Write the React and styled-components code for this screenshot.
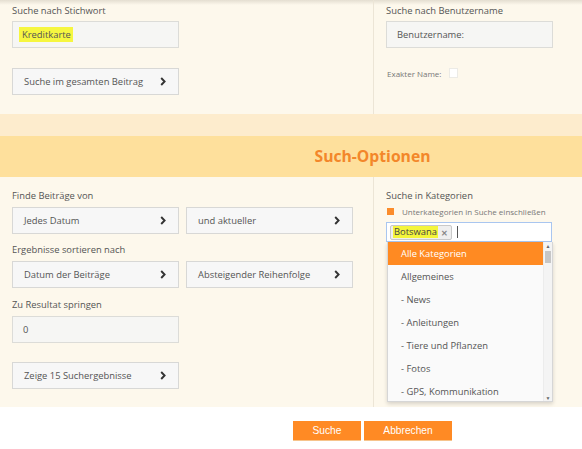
import React from "react";
import styled, { createGlobalStyle } from "styled-components";

const Global = createGlobalStyle`
  html, body { margin: 0; padding: 0; background: #ffffff; }
  body { font-family: "Open Sans", "Liberation Sans", sans-serif; color: #555; width: 582px; height: 449px; overflow: hidden; }
  * { box-sizing: border-box; }
`;

const Page = styled.div`
  width: 582px;
  height: 449px;
  display: flex;
  flex-direction: column;
  position: relative;
  &::before {
    content: "";
    position: absolute;
    left: 0; right: 0; top: 0; height: 5px;
    background: linear-gradient(#e4ded1, rgba(253,248,236,0));
  }
`;

const Section = styled.div`
  display: grid;
  grid-template-columns: 373px 1fr;
  background: #fdf8ec;
  height: ${(p) => p.$h}px;
`;

const Column = styled.div`
  display: flex;
  flex-direction: column;
  padding: ${(p) => p.$pt}px 0 0 12px;
  border-left: ${(p) => (p.$right ? "1px solid #ece5d6" : "none")};
  position: relative;
`;

const Label = styled.div`
  font-size: 9.4px;
  line-height: 16px;
  height: 16px;
  color: #555;
  white-space: nowrap;
  margin-top: ${(p) => p.$mt || 0}px;
`;

const Field = styled.div`
  width: 167px;
  height: 27px;
  margin-top: ${(p) => p.$mt || 0}px;
  background: #f6f6f4;
  border: 1px solid #dcdcd8;
  display: flex;
  align-items: center;
  padding-left: ${(p) => p.$pl || 10}px;
  font-size: 9.4px;
  color: #555;
`;

const Mark = styled.span`
  background: #f6f640;
  padding: 1px 2px 1px 3px;
  color: #555;
`;

const SelectButton = styled.div`
  width: 167px;
  height: 27px;
  margin-top: ${(p) => p.$mt || 0}px;
  background: #f7f7f7;
  border: 1px solid #d8d8d6;
  display: flex;
  align-items: center;
  justify-content: space-between;
  padding: 0 12px 0 11px;
  font-size: 9.4px;
  color: #555;
  white-space: nowrap;
`;

const Row = styled.div`
  display: flex;
  gap: 7px;
  margin-top: ${(p) => p.$mt || 0}px;
`;

const Chevron = () => (
  <svg width="6" height="9" viewBox="0 0 6 9">
    <path d="M1.2 1 L4.6 4.5 L1.2 8" fill="none" stroke="#333" strokeWidth="1.9" />
  </svg>
);

const SmallRow = styled.div`
  display: flex;
  align-items: center;
  gap: ${(p) => p.$gap || 6}px;
  margin-top: ${(p) => p.$mt || 0}px;
  padding-left: ${(p) => p.$pl || 0}px;
  font-size: 8px;
  color: #777;
  height: 12px;
  white-space: nowrap;
`;

const Checkbox = styled.span`
  width: 9px;
  height: 10px;
  background: #ffffff;
  border: 1px solid #ecebe6;
`;

const OrangeSquare = styled.span`
  width: 7px;
  height: 7px;
  background: #fb8c2c;
`;

const LightBand = styled.div`
  height: 22px;
  background: #fdeccd;
`;

const Band = styled.div`
  height: 41px;
  background: #fee09c;
  display: flex;
  align-items: center;
  justify-content: center;
  padding-left: 163px;
  padding-bottom: 2px;
  font-weight: 700;
  font-size: 15.7px;
  color: #f3872a;
`;

const SelectBox = styled.div`
  width: 166px;
  height: 20px;
  margin-top: ${(p) => p.$mt || 0}px;
  background: #ffffff;
  border: 1px solid #a9c6f0;
  display: flex;
  align-items: center;
  padding-left: 3px;
  gap: 5px;
  position: relative;
`;

const Tag = styled.span`
  display: inline-flex;
  align-items: center;
  gap: 3px;
  height: 15px;
  padding: 0 3px 0 2px;
  border: 1px solid #c9c9c9;
  border-radius: 2px;
  background: #efefef;
  font-size: 9.4px;
  color: #444;
`;

const TagMark = styled.span`
  background: #f4f53a;
  line-height: 12px;
  padding: 0 1px;
`;

const Close = styled.span`
  font-size: 8px;
  color: #888;
  font-weight: 700;
`;

const Caret = styled.span`
  width: 1px;
  height: 12px;
  background: #555;
`;

const Dropdown = styled.div`
  position: absolute;
  left: 0px;
  top: 19px;
  width: 166px;
  height: 160px;
  background: #fafafa;
  border: 1px solid #d6d6d6;
  border-top: none;
  box-shadow: 0 2px 4px rgba(0,0,0,0.15);
  display: flex;
  z-index: 2;
`;

const List = styled.div`
  flex: 1;
  display: flex;
  flex-direction: column;
  overflow: hidden;
`;

const Item = styled.div`
  height: 23px;
  flex: none;
  display: flex;
  align-items: center;
  padding-left: 13px;
  font-size: 9.4px;
  color: ${(p) => (p.$active ? "#ffffff" : "#555")};
  background: ${(p) => (p.$active ? "#ff8a22" : "transparent")};
`;

const Scrollbar = styled.div`
  width: 9px;
  display: flex;
  flex-direction: column;
  align-items: center;
  background: #f4f4f4;
  border-left: 1px solid #ececec;
  padding-top: 2px;
`;

const Thumb = styled.div`
  width: 6px;
  height: 12px;
  background: #c6c6c6;
  margin-top: 2px;
`;

const Arrow = styled.span`
  font-size: 5px;
  line-height: 5px;
  color: #666;
`;

const Spacer = styled.div`
  flex: 1;
`;

const Footer = styled.div`
  flex: 1;
  background: #ffffff;
  display: flex;
  padding: 14px 0 0 293px;
  gap: 3px;
  align-items: flex-start;
`;

const ActionButton = styled.div`
  width: ${(p) => p.$w}px;
  height: 19px;
  background: #ff8a24;
  color: #ffffff;
  font-family: "Liberation Sans", Arial, sans-serif;
  font-size: 10.2px;
  display: flex;
  align-items: center;
  justify-content: center;
  box-shadow: 0 1px 0 #f6c48c;
`;

const categories = [
  "Allgemeines",
  "- News",
  "- Anleitungen",
  "- Tiere und Pflanzen",
  "- Fotos",
  "- GPS, Kommunikation",
];

export default function App() {
  return (
    <>
      <Global />
      <Page>
        <Section $h={114}>
          <Column $pt={3}>
            <Label>Suche nach Stichwort</Label>
            <Field $mt={2} $pl={6}>
              <Mark>Kreditkarte</Mark>
            </Field>
            <SelectButton $mt={20}>
              Suche im gesamten Beitrag <Chevron />
            </SelectButton>
          </Column>
          <Column $right $pt={3}>
            <Label>Suche nach Benutzername</Label>
            <Field $mt={2}>Benutzername:</Field>
            <SmallRow $mt={19} $gap={8} $pl={1}>
              Exakter Name: <Checkbox />
            </SmallRow>
          </Column>
        </Section>
        <LightBand />
        <Band>Such-Optionen</Band>
        <Section $h={230}>
          <Column $pt={11}>
            <Label>Finde Beiträge von</Label>
            <Row $mt={3}>
              <SelectButton>
                Jedes Datum <Chevron />
              </SelectButton>
              <SelectButton>
                und aktueller <Chevron />
              </SelectButton>
            </Row>
            <Label $mt={8}>Ergebnisse sortieren nach</Label>
            <Row $mt={3}>
              <SelectButton>
                Datum der Beiträge <Chevron />
              </SelectButton>
              <SelectButton>
                Absteigender Reihenfolge <Chevron />
              </SelectButton>
            </Row>
            <Label $mt={9}>Zu Resultat springen</Label>
            <Field $mt={3}>0</Field>
            <SelectButton $mt={19}>
              Zeige 15 Suchergebnisse <Chevron />
            </SelectButton>
          </Column>
          <Column $right $pt={11}>
            <Label>Suche in Kategorien</Label>
            <SmallRow $mt={1} $gap={8} $pl={1}>
              <OrangeSquare /> Unterkategorien in Suche einschließen
            </SmallRow>
            <SelectBox $mt={5}>
              <Tag>
                <TagMark>Botswana</TagMark>
                <Close>✕</Close>
              </Tag>
              <Caret />
              <Dropdown>
                <List>
                  <Item $active>Alle Kategorien</Item>
                  {categories.map((c) => (
                    <Item key={c}>{c}</Item>
                  ))}
                </List>
                <Scrollbar>
                  <Arrow>▲</Arrow>
                  <Thumb />
                  <Spacer />
                  <Arrow>▼</Arrow>
                </Scrollbar>
              </Dropdown>
            </SelectBox>
          </Column>
        </Section>
        <Footer>
          <ActionButton $w={68}>Suche</ActionButton>
          <ActionButton $w={88}>Abbrechen</ActionButton>
        </Footer>
      </Page>
    </>
  );
}
